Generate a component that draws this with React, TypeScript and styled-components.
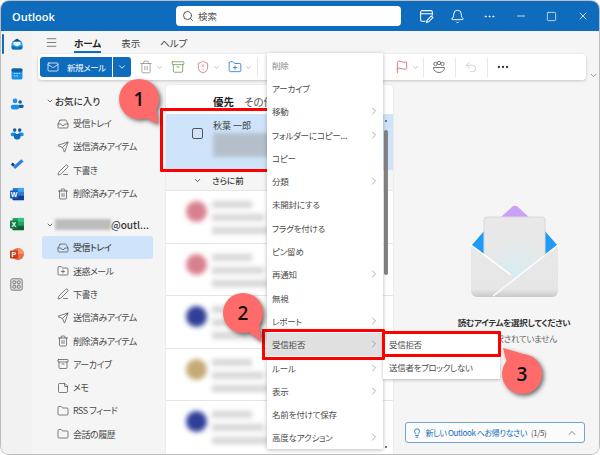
import React from "react"
import styled, { createGlobalStyle } from "styled-components"
import {
  Archive, Bell, ChevronDown, ChevronRight, ChevronUp, Ellipsis, Flag, Folder, FolderPlus, Inbox,
  Lightbulb, Mail, Menu, Minus, PenLine, Search, Send, ShieldAlert, Square, StickyNote, Trash2, Undo2, X,
} from "lucide-react"

const FONT = `"Noto Sans CJK JP", "Noto Sans", sans-serif`

const GlobalStyle = createGlobalStyle`
  html, body { margin: 0; padding: 0; background: #fff; }
  body { font-family: ${FONT}; color: #424242; font-feature-settings: "palt"; }
  * { box-sizing: border-box; }
`

const favorites = [
  { icon: <Inbox size={12} strokeWidth={1.4} />, label: "受信トレイ" },
  { icon: <Send size={12} strokeWidth={1.4} />, label: "送信済みアイテム" },
  { icon: <PenLine size={12} strokeWidth={1.4} />, label: "下書き" },
  { icon: <Trash2 size={12} strokeWidth={1.4} />, label: "削除済みアイテム" },
]

const folders = [
  { icon: <Inbox size={12} strokeWidth={1.4} />, label: "受信トレイ", active: true },
  { icon: <FolderPlus size={12} strokeWidth={1.4} />, label: "迷惑メール" },
  { icon: <PenLine size={12} strokeWidth={1.4} />, label: "下書き" },
  { icon: <Send size={12} strokeWidth={1.4} />, label: "送信済みアイテム" },
  { icon: <Trash2 size={12} strokeWidth={1.4} />, label: "削除済みアイテム" },
  { icon: <Archive size={12} strokeWidth={1.4} />, label: "アーカイブ" },
  { icon: <StickyNote size={12} strokeWidth={1.4} />, label: "メモ" },
  { icon: <Folder size={12} strokeWidth={1.4} />, label: "RSS フィード" },
  { icon: <Folder size={12} strokeWidth={1.4} />, label: "会話の履歴" },
]

const menuItems = [
  { label: "削除", dim: true },
  { label: "アーカイブ" },
  { label: "移動", sub: true },
  { label: "フォルダーにコピー...", sub: true },
  { label: "コピー" },
  { label: "分類", sub: true },
  { label: "未開封にする" },
  { label: "フラグを付ける" },
  { label: "ピン留め" },
  { label: "再通知", sub: true },
  { label: "無視" },
  { label: "レポート", sub: true },
  { label: "受信拒否", sub: true, active: true },
  { label: "ルール", sub: true },
  { label: "表示", sub: true },
  { label: "名前を付けて保存" },
  { label: "高度なアクション", sub: true },
]

const messageColors = ["#d9808f", "#d9808f", "#2f3f98", "#c4ab74", "#2f3f98"]

const RailIcons = () => (
  <>
    <RailSlot>
      <Indicator />
      <svg width="14" height="14" viewBox="0 0 18 18">
        <path d="M3 6 9 2l6 4v2H3z" fill="#0a4f8f" />
        <rect x="2" y="6" width="14" height="10" rx="3" fill="#28a8ea" />
        <path d="M4.500 6h9v4l-4.500 2-4.500-2z" fill="#e8f2fb" />
        <path d="M2 11l7 2.500 7-2.500v3a2 2 0 0 1-2 2H4a2 2 0 0 1-2-2z" fill="#0f6cbd" />
      </svg>
    </RailSlot>
    <RailSlot>
      <svg width="14" height="14" viewBox="0 0 18 18">
        <rect x="2" y="2" width="14" height="14" rx="2" fill="#1c8fe6" />
        <rect x="2" y="2" width="14" height="4" rx="1.500" fill="#0f5fa8" />
        <path d="M5 8.500h2M8 8.500h2M11 8.500h2M5 11.500h2M8 11.500h2" stroke="#bfe0fa" strokeWidth="1.300" />
      </svg>
    </RailSlot>
    <RailSlot>
      <svg width="14" height="14" viewBox="0 0 18 18">
        <circle cx="6.500" cy="5" r="3" fill="#1c8fe6" />
        <circle cx="13" cy="6.500" r="2.300" fill="#0f5fa8" />
        <path d="M1 12.500a2.500 2.500 0 0 1 2.500-2.500h6a2.500 2.500 0 0 1 2.500 2.500v.5a3 3 0 0 1-3 3H4a3 3 0 0 1-3-3z" fill="#1c8fe6" />
        <path d="M11 10h5a1.500 1.500 0 0 1 1.500 1.500v.5a2 2 0 0 1-2 2H12z" fill="#0f5fa8" />
      </svg>
    </RailSlot>
    <RailSlot>
      <svg width="14" height="14" viewBox="0 0 18 18">
        <circle cx="6" cy="4" r="2.300" fill="#0f5fa8" />
        <circle cx="12.500" cy="4" r="2.300" fill="#0f5fa8" />
        <rect x="1" y="7" width="7" height="5" rx="2" fill="#1c8fe6" />
        <rect x="10.500" y="7" width="7" height="5" rx="2" fill="#1c8fe6" />
        <path d="M5 9h8.500v4a3 3 0 0 1-3 3h-2.500a3 3 0 0 1-3-3z" fill="#0f6cbd" />
      </svg>
    </RailSlot>
    <RailSlot>
      <svg width="14" height="14" viewBox="0 0 18 18">
        <path d="M1 9.500 3.500 7l3 3-2.500 2.500z" fill="#0f3f9e" />
        <path d="M4 12.500 14.500 3l3 2.800L6.500 15.500z" fill="#2f7fe6" />
      </svg>
    </RailSlot>
    <RailSlot>
      <svg width="14" height="14" viewBox="0 0 16 16">
        <rect x="3" y="1" width="13" height="14" rx="1" fill="#2b7cd3" />
        <rect x="9" y="1" width="7" height="4.500" fill="#41a5ee" />
        <rect x="3" y="10" width="13" height="5" fill="#103f91" />
        <rect x="0" y="4" width="9" height="9" rx="1" fill="#185abd" />
        <LogoText x="4.500" y="11">W</LogoText>
      </svg>
    </RailSlot>
    <RailSlot>
      <svg width="14" height="14" viewBox="0 0 16 16">
        <rect x="3" y="1" width="13" height="14" rx="1" fill="#21a366" />
        <rect x="9" y="1" width="7" height="4.500" fill="#33c481" />
        <rect x="3" y="10" width="13" height="5" fill="#185c37" />
        <rect x="0" y="4" width="9" height="9" rx="1" fill="#107c41" />
        <LogoText x="4.500" y="11">X</LogoText>
      </svg>
    </RailSlot>
    <RailSlot>
      <svg width="14" height="14" viewBox="0 0 16 16">
        <circle cx="9" cy="8" r="7" fill="#ed6c47" />
        <path d="M9 1a7 7 0 0 1 7 7H9z" fill="#ff8f6b" />
        <rect x="0" y="4" width="9" height="9" rx="1" fill="#c43e1c" />
        <LogoText x="4.500" y="11">P</LogoText>
      </svg>
    </RailSlot>
    <RailSlot>
      <svg width="13" height="13" viewBox="0 0 16 16" fill="none" stroke="#616161">
        <rect x="1" y="1" width="14" height="14" rx="2" fill="#e4e4e4" />
        <rect x="3.500" y="3.500" width="3.500" height="3.500" rx="1" />
        <rect x="9" y="3.500" width="3.500" height="3.500" rx="1" />
        <rect x="3.500" y="9" width="3.500" height="3.500" rx="1" />
        <rect x="9" y="9" width="3.500" height="3.500" rx="1" />
      </svg>
    </RailSlot>
  </>
)

const Envelope = () => (
  <svg width="87" height="92" viewBox="0 0 87 92">
    <defs>
      <radialGradient id="paperGlow" cx="50%" cy="85%" r="55%">
        <stop offset="0%" stopColor="#d4edf4" />
        <stop offset="100%" stopColor="#e8e8e8" />
      </radialGradient>
      <linearGradient id="bodyShade" x1="0" y1="0" x2="0" y2="1">
        <stop offset="0%" stopColor="#e8e8e8" />
        <stop offset="85%" stopColor="#e6e6e6" />
        <stop offset="100%" stopColor="#c9c9c9" />
      </linearGradient>
    </defs>
    <path d="M29 13 41 2a4 4 0 0 1 6 0l12 11z" fill="#c9a2f7" />
    <path d="M0 41 14 25v30zM87 41 73 25v30z" fill="#1f9bf5" />
    <rect x="13" y="12" width="61" height="72" rx="3" fill="url(#paperGlow)" stroke="#d8d8d8" />
    <path d="M0 40 44 73 22 92H6a6 6 0 0 1-6-6z" fill="url(#bodyShade)" />
    <path d="M87 40V86a6 6 0 0 1-6 6H22z" fill="url(#bodyShade)" />
    <path d="M0 40 40 70" stroke="#fff" strokeWidth="1.500" />
    <path d="M87 40 22 91" stroke="#fbfbfb" strokeWidth="1.500" />
  </svg>
)

const Callout = ({ x, y, tail, n }: { x: number; y: number; tail: string; n: number }) => (
  <CalloutWrap $x={x} $y={y}>
    <svg width="40" height="40" viewBox="0 0 40 40">
      <polygon points={tail} fill="#ff6b6b" />
      <circle cx="20" cy="20" r="20" fill="#ff6b6b" />
    </svg>
    <CalloutNumber>{n}</CalloutNumber>
  </CalloutWrap>
)

const App = () => {
  return (
    <Stage>
      <GlobalStyle />
      <Window>
        <TitleBar>
          <Brand>Outlook</Brand>
          <SearchBox>
            <Search size={12} color="#555" />
            <span>検索</span>
          </SearchBox>
          <TitleIcons>
            <TitleIcon>
              <svg width="15" height="15" viewBox="0 0 14 14" fill="none" stroke="#fff">
                <path d="M6 11.500H3a1.500 1.500 0 0 1-1.500-1.500V3A1.500 1.500 0 0 1 3 1.500h8A1.500 1.500 0 0 1 12.500 3v3" />
                <path d="M1.500 4.500h11M7 12.500l.5-2 4-4 1.500 1.500-4 4z" />
              </svg>
            </TitleIcon>
            <TitleIcon><Bell size={15} strokeWidth={1.5} /></TitleIcon>
            <TitleIcon><Ellipsis size={13} strokeWidth={1.5} /></TitleIcon>
            <TitleIcon><Minus size={12} strokeWidth={1.5} /></TitleIcon>
            <TitleIcon><Square size={11} strokeWidth={1.5} /></TitleIcon>
            <TitleIcon><X size={12} strokeWidth={1.5} /></TitleIcon>
          </TitleIcons>
        </TitleBar>
        <Body>
          <Rail><RailIcons /></Rail>
          <Main>
            <Tabs>
              <Menu size={13} strokeWidth={1.4} color="#555" />
              <Tab $active>ホーム</Tab>
              <Tab>表示</Tab>
              <Tab>ヘルプ</Tab>
            </Tabs>
            <RibbonRow>
              <Ribbon>
                <NewMail>
                  <Mail size={12} strokeWidth={1.5} />
                  <span>新規メール</span>
                </NewMail>
                <SplitButton><ChevronDown size={10} strokeWidth={2} /></SplitButton>
                <RibbonTool $ml={8}><Trash2 size={14} color="#8a8a8a" strokeWidth={1.3} /><ChevronDown size={7} color="#999" /></RibbonTool>
                <RibbonTool $ml={8}><Archive size={14} color="#6f9a55" strokeWidth={1.4} /></RibbonTool>
                <RibbonTool $ml={11}><ShieldAlert size={14} color="#c96a6a" strokeWidth={1.3} /><ChevronDown size={7} color="#999" /></RibbonTool>
                <RibbonTool $ml={8}><FolderPlus size={14} color="#0f6cbd" strokeWidth={1.3} /><ChevronDown size={7} color="#999" /></RibbonTool>
                <RibbonSep $ml={5} />
                <RibbonTool $ml={137}><Flag size={14} color="#c9565f" strokeWidth={1.3} /><ChevronDown size={7} color="#999" /></RibbonTool>
                <RibbonSep $ml={4} />
                <RibbonTool $ml={8}>
                  <svg width="14" height="14" viewBox="0 0 14 14" fill="none" stroke="#777">
                    <circle cx="3.500" cy="4" r="1.700" /><circle cx="10.500" cy="4" r="1.700" /><circle cx="7" cy="3" r="1.700" />
                    <path d="M1.500 7.500h11c0 3-2.500 5-5.500 5s-5.500-2-5.500-5z" />
                  </svg>
                </RibbonTool>
                <RibbonSep $ml={9} />
                <RibbonTool $ml={8}><Undo2 size={14} color="#c8c8c8" strokeWidth={1.4} /></RibbonTool>
                <RibbonSep $ml={9} />
                <RibbonTool $ml={8}><Ellipsis size={14} color="#333" /></RibbonTool>
              </Ribbon>
              <ChevronDown size={9} color="#777" />
            </RibbonRow>
            <Content>
              <Nav>
                <NavHeader><ChevronDown size={8} /><span>お気に入り</span></NavHeader>
                {favorites.map((item) => (
                  <NavItem key={item.label}>{item.icon}<span>{item.label}</span></NavItem>
                ))}
                <AccountHeader>
                  <ChevronDown size={8} />
                  <BlurName />
                  <span>@outl...</span>
                </AccountHeader>
                {folders.map((item) => (
                  <NavItem key={item.label} $active={item.active}>{item.icon}<span>{item.label}</span></NavItem>
                ))}
              </Nav>
              <MessageList>
                <ListTabs>
                  <ListTab $active>優先</ListTab>
                  <ListTab>その他</ListTab>
                </ListTabs>
                <SelectedRow>
                  <CheckBox />
                  <SelectedText>
                    <span>秋葉 一郎</span>
                    <SelectedBlur />
                  </SelectedText>
                </SelectedRow>
                <GroupRow><ChevronDown size={9} /><span>さらに前</span></GroupRow>
                {messageColors.map((color, i) => (
                  <MessageRow key={i}>
                    <Avatar $color={color} />
                    <MessageLines>
                      <BlurLine $width={40} />
                      <BlurLine $width={52} />
                      <BlurLine $width={56} />
                    </MessageLines>
                  </MessageRow>
                ))}
                <ScrollArrow $top={35} />
                <ScrollThumb />
                <ScrollArrow $top={361} />
              </MessageList>
              <Reading>
                <Envelope />
                <ReadingTitle>読むアイテムを選択してください</ReadingTitle>
                <ReadingSub>何も選択されていません</ReadingSub>
                <TipButton>
                  <Lightbulb size={10} />
                  <span>新しい Outlook へお帰りなさい</span>
                  <TipCount>(1/5)</TipCount>
                  <ChevronUp size={12} color="#555" strokeWidth={1.4} />
                </TipButton>
              </Reading>
            </Content>
          </Main>
        </Body>
      </Window>

      <RedBox $x={160} $y={108} $w={112} $h={64} />
      <ContextMenu>
        {menuItems.map((item) => (
          <MenuRow key={item.label} $dim={item.dim} $active={item.active}>
            <span>{item.label}</span>
            {item.sub && <ChevronRight size={12} strokeWidth={1.1} color="#666" />}
          </MenuRow>
        ))}
      </ContextMenu>
      <SubMenu>
        <SubRow>受信拒否</SubRow>
        <SubRow>送信者をブロックしない</SubRow>
      </SubMenu>
      <RedBox $x={262} $y={329} $w={123} $h={31} />
      <RedBox $x={382} $y={331} $w={119} $h={26} />
      <Callout x={119} y={79} n={1} tail="26,39 39,45 37,29" />
      <Callout x={223} y={293} n={2} tail="26,39 38,49 36,29" />
      <Callout x={502} y={354} n={3} tail="1,-6 25,1 5,9" />
    </Stage>
  )
}

export default App

const Stage = styled.div`
  position: relative;
  width: 600px;
  height: 455px;
  padding: 1px 1px 1px 1px;
  overflow: hidden;
  background: #fff;
`

const Window = styled.div`
  width: 598px;
  height: 453px;
  display: flex;
  flex-direction: column;
  background: #f5f5f5;
  border-radius: 8px;
  overflow: hidden;
  box-shadow: 0 0 0 1px #bdbdbd;
`

const TitleBar = styled.div`
  height: 30px;
  flex: none;
  display: flex;
  align-items: center;
  background: #0f6cbd;
  color: #fff;
  padding-left: 11px;
`

const Brand = styled.div`
  width: 165px;
  font-family: "Open Sans", sans-serif;
  font-size: 11px;
  font-weight: 600;
`

const SearchBox = styled.div`
  width: 226px;
  height: 20px;
  display: flex;
  align-items: center;
  gap: 4px;
  padding-left: 6px;
  background: #fff;
  border-radius: 4px;
  font-size: 9.5px;
  color: #555;
`

const TitleIcons = styled.div`
  display: flex;
  align-items: center;
  margin-left: 10px;
`

const TitleIcon = styled.div`
  width: 31.400px;
  height: 20px;
  display: flex;
  align-items: center;
  justify-content: center;
  color: #fff;
`

const Body = styled.div`
  flex: 1;
  display: flex;
  min-height: 0;
`

const Rail = styled.div`
  width: 31px;
  flex: none;
  display: flex;
  flex-direction: column;
  gap: 10px;
  padding-top: 3px;
  background: #f2f2f2;
`

const RailSlot = styled.div`
  position: relative;
  height: 20px;
  display: flex;
  align-items: center;
  justify-content: center;
`

const Indicator = styled.div`
  position: absolute;
  left: 1px;
  top: 0;
  width: 2px;
  height: 20px;
  border-radius: 1px;
  background: #0f6cbd;
`

const LogoText = styled.text`
  font-family: "Liberation Sans", sans-serif;
  font-size: 8px;
  font-weight: 700;
  fill: #fff;
  text-anchor: middle;
`

const Main = styled.div`
  flex: 1;
  min-width: 0;
  display: flex;
  flex-direction: column;
`

const Tabs = styled.div`
  height: 23px;
  flex: none;
  display: flex;
  align-items: center;
  padding-left: 13px;
`

const Tab = styled.div<{ $active?: boolean }>`
  position: relative;
  margin-left: ${(p) => (p.$active ? "16px" : "20px")};
  font-size: ${(p) => (p.$active ? "9.500px" : "9.500px")};
  font-weight: ${(p) => (p.$active ? 700 : 400)};
  color: ${(p) => (p.$active ? "#242424" : "#424242")};

  &::after {
    content: "";
    display: ${(p) => (p.$active ? "block" : "none")};
    position: absolute;
    left: 0;
    right: 0;
    bottom: -3px;
    height: 2px;
    background: #0f6cbd;
  }
`

const RibbonRow = styled.div`
  height: 26px;
  flex: none;
  display: flex;
  align-items: flex-end;
  gap: 3px;
  padding-left: 6px;
`

const Ribbon = styled.div`
  width: 548px;
  height: 26px;
  display: flex;
  align-items: center;
  padding-left: 2px;
  background: #fff;
  border-radius: 4px;
  box-shadow: 0 1px 3px rgba(0, 0, 0, 0.2);
`

const NewMail = styled.div`
  width: 72px;
  height: 20px;
  display: flex;
  align-items: center;
  gap: 8px;
  padding-left: 7px;
  background: #0f6cbd;
  border-radius: 3px 0 0 3px;
  color: #fff;
  font-size: 8.500px;
  letter-spacing: -0.4px;
  white-space: nowrap;
`

const SplitButton = styled.div`
  width: 18px;
  height: 20px;
  margin-left: 1px;
  display: flex;
  align-items: center;
  justify-content: center;
  background: #0f6cbd;
  border-radius: 0 3px 3px 0;
  color: #fff;
`

const RibbonTool = styled.div<{ $ml: number }>`
  display: flex;
  align-items: center;
  gap: 3px;
  margin-left: ${(p) => p.$ml}px;
`

const RibbonSep = styled.div<{ $ml: number }>`
  width: 1px;
  height: 20px;
  margin-left: ${(p) => p.$ml}px;
  background: #e8e8e8;
`

const Content = styled.div`
  flex: 1;
  min-height: 0;
  display: flex;
  margin-top: 5px;
`

const Nav = styled.div`
  width: 134px;
  flex: none;
  padding-top: 4px;
`

const NavHeader = styled.div`
  height: 23px;
  display: flex;
  align-items: center;
  gap: 1px;
  padding-left: 14px;
  font-size: 9.500px;
  font-weight: 500;
  color: #333;
`

const AccountHeader = styled(NavHeader)`
  margin-top: 8px;
  font-size: 10px;

  & > span {
    margin-left: -1px;
    white-space: nowrap;
  }
`

const BlurName = styled.div`
  width: 56px;
  height: 11px;
  background: #bcbcbc;
  filter: blur(1.500px);
`

const NavItem = styled.div<{ $active?: boolean }>`
  width: 111px;
  height: 23.300px;
  margin-left: 10px;
  display: flex;
  align-items: center;
  gap: 4px;
  padding-left: 15px;
  border-radius: 3px;
  background: ${(p) => (p.$active ? "#cfe4fa" : "transparent")};
  font-size: 9px;
  letter-spacing: -0.5px;
  font-weight: ${(p) => (p.$active ? 500 : 400)};
  white-space: nowrap;
  color: #4a4a4a;
`

const MessageList = styled.div`
  position: relative;
  width: 227px;
  flex: none;
  background: #fff;
  border-radius: 4px 4px 0 0;
  overflow: hidden;
  box-shadow: 0 0 2px rgba(0, 0, 0, 0.12);
`

const ListTabs = styled.div`
  height: 29px;
  display: flex;
  align-items: center;
  gap: 10px;
  padding-left: 47px;
  padding-top: 4px;
`

const ListTab = styled.div<{ $active?: boolean }>`
  font-size: 10.500px;
  font-weight: ${(p) => (p.$active ? 700 : 400)};
  color: ${(p) => (p.$active ? "#242424" : "#555")};
`

const SelectedRow = styled.div`
  height: 56px;
  display: flex;
  gap: 10px;
  padding: 5px 0 0 26px;
  background: #cfe4fa;
`

const CheckBox = styled.div`
  width: 11px;
  height: 11px;
  margin-top: 9px;
  border: 1px solid #555;
  border-radius: 2px;
`

const SelectedText = styled.div`
  display: flex;
  flex-direction: column;
  font-size: 9px;
  line-height: 13px;
  color: #424242;
`

const SelectedBlur = styled.div`
  width: 60px;
  height: 24px;
  margin-top: 1px;
  background: #b4bfcb;
  filter: blur(2px);
`

const GroupRow = styled.div`
  height: 20px;
  display: flex;
  align-items: center;
  gap: 10px;
  padding-left: 27px;
  background: #f5f5f5;
  font-size: 8.500px;
  font-weight: 500;
  color: #333;
`

const MessageRow = styled.div`
  height: 52.500px;
  display: flex;
  gap: 5px;
  padding: 10px 0 0 20px;
  border-top: 1px solid #e6e6e6;
  background: #fff;
`

const Avatar = styled.div<{ $color: string }>`
  width: 21px;
  height: 21px;
  border-radius: 50%;
  background: ${(p) => p.$color};
  filter: blur(2.500px);
`

const MessageLines = styled.div`
  display: flex;
  flex-direction: column;
  gap: 6px;
`

const BlurLine = styled.div<{ $width: number }>`
  width: ${(p) => p.$width}px;
  height: 7px;
  background: #d6d6d6;
  filter: blur(2.500px);
`

const ScrollThumb = styled.div`
  position: absolute;
  right: 5px;
  top: 45px;
  width: 4px;
  height: 145px;
  border-radius: 2px;
  background: #858585;
`

const ScrollArrow = styled.div<{ $top: number }>`
  position: absolute;
  right: 6px;
  top: ${(p) => p.$top}px;
  width: 2px;
  height: 2px;
  background: #777;
`

const Reading = styled.div`
  flex: 1;
  min-width: 0;
  display: flex;
  flex-direction: column;
  align-items: center;
  padding: 120px 0 11px 36px;
  background: #f5f5f5;
`

const ReadingTitle = styled.div`
  margin-top: 18px;
  font-size: 8.500px;
  letter-spacing: -0.3px;
  line-height: 14px;
  font-weight: 700;
  white-space: nowrap;
  color: #333;
`

const ReadingSub = styled.div`
  margin-top: 2px;
  font-size: 8.500px;
  letter-spacing: -0.3px;
  line-height: 14px;
  white-space: nowrap;
  color: #666;
`

const TipButton = styled.div`
  width: 180px;
  height: 21px;
  margin: auto 0 0 -39px;
  display: flex;
  align-items: center;
  gap: 4px;
  padding: 0 6px;
  background: #fbfbfb;
  border: 1px solid #6fa5d8;
  border-radius: 3px;
  font-size: 8px;
  letter-spacing: -0.4px;
  white-space: nowrap;
  color: #0f6cbd;

  & > svg:last-child {
    margin-left: auto;
  }
`

const TipCount = styled.span`
  color: #555;
`

const ContextMenu = styled.div`
  position: absolute;
  left: 267px;
  top: 53px;
  width: 116px;
  height: 396px;
  display: flex;
  flex-direction: column;
  background: #fff;
  box-shadow: 0 1px 4px rgba(0, 0, 0, 0.28);
`

const MenuRow = styled.div<{ $dim?: boolean; $active?: boolean }>`
  height: 23.300px;
  flex: none;
  display: flex;
  align-items: center;
  justify-content: space-between;
  padding: 0 3px 0 5px;
  background: ${(p) => (p.$active ? "#e0e0e0" : "transparent")};
  font-size: 8.500px;
  letter-spacing: -0.2px;
  white-space: nowrap;
  color: ${(p) => (p.$dim ? "#8a8a8a" : "#4a4a4a")};
`

const SubMenu = styled.div`
  position: absolute;
  left: 383px;
  top: 332px;
  width: 117px;
  height: 47px;
  background: #fff;
  box-shadow: 0 1px 3px rgba(0, 0, 0, 0.25);
`

const SubRow = styled.div`
  height: 23.500px;
  display: flex;
  align-items: center;
  padding-left: 6px;
  font-size: 8.500px;
  letter-spacing: -0.3px;
  white-space: nowrap;
  color: #4a4a4a;
`

const RedBox = styled.div<{ $x: number; $y: number; $w: number; $h: number }>`
  position: absolute;
  left: ${(p) => p.$x}px;
  top: ${(p) => p.$y}px;
  width: ${(p) => p.$w}px;
  height: ${(p) => p.$h}px;
  border: 3px solid #f00;
  border-radius: 1px;
`

const CalloutWrap = styled.div<{ $x: number; $y: number }>`
  position: absolute;
  left: ${(p) => p.$x}px;
  top: ${(p) => p.$y}px;
  width: 40px;
  height: 40px;

  & > svg {
    overflow: visible;
    filter: drop-shadow(2px 2px 2px rgba(0, 0, 0, 0.55));
  }
`

const CalloutNumber = styled.div`
  position: absolute;
  inset: 0;
  display: flex;
  align-items: center;
  justify-content: center;
  font-family: "Open Sans", sans-serif;
  font-size: 19px;
  font-weight: 600;
  color: #111;
`
